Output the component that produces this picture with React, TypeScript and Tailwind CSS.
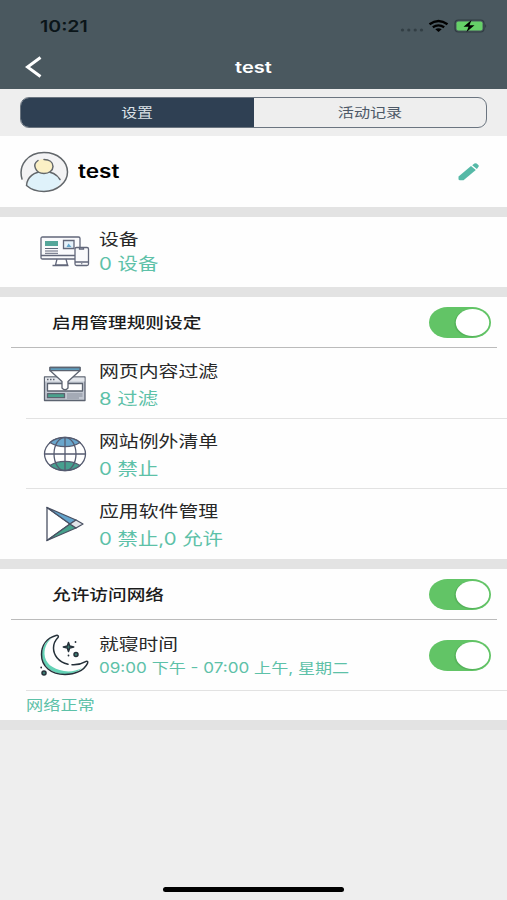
import type { ReactNode } from 'react';

interface RowProps {
  icon: ReactNode;
  title: string;
  detail: string;
}

// Wide lettering: glyphs are stretched horizontally from their left edge
function WideText({ children, className = '' }: { children: ReactNode; className?: string }) {
  return (
    <span className={`block w-max origin-left scale-x-[1.22] whitespace-pre ${className}`}>
      {children}
    </span>
  );
}

function Toggle() {
  return (
    <button type="button" role="switch" aria-checked="true" className="block h-[31px] w-[62px] shrink-0">
      <svg viewBox="0 0 62 31" className="h-full w-full">
        <rect width="62" height="31" rx="18.5" ry="15.5" fill="#62c466" />
        <ellipse cx="42.5" cy="16.2" rx="17.2" ry="14" fill="#4fa854" opacity="0.6" />
        <ellipse cx="43.5" cy="15.5" rx="16.7" ry="13.5" fill="#fff" />
      </svg>
    </button>
  );
}

function AvatarIcon() {
  return (
    <svg width="50" height="42" viewBox="0 0 50 42" fill="none" stroke="#62676b" strokeWidth="1.5" strokeLinecap="round">
      <ellipse cx="25" cy="21" rx="23.5" ry="19" fill="#f3f3f4" stroke="none" />
      <path d="M8 35c1-8 7-14 17-14 8 0 14 4 17 9l-2 4c-4 4-9 6-16 6-7 0-12-2-16-5z" fill="#dff2fa" stroke="none" />
      <path d="M3 28C-1 14 9 1.500 25 1.500c14 0 23.500 9 23.500 19.500S38 40.500 25 40.500c-7 0-13-2-17.500-6C8 26 15 20.500 25 20.500c7 0 13 3 16 8" />
      <ellipse cx="25" cy="15.500" rx="9" ry="7.500" fill="#fbf0c5" stroke="none" />
      <path d="M19 9.500c-3 2-4 5-2.500 8 1.500 3.500 4.500 5 8.500 5 5 0 9-3 9-7 0-4.500-4-7-9-7" />
    </svg>
  );
}

function DevicesIcon() {
  return (
    <svg width="50" height="32" viewBox="0 0 50 32" fill="none" stroke="#62677a" strokeWidth="1.300">
      <path d="M2.500 1h36q1.500 0 1.500 1.500v19q0 1.500-1.500 1.500h-36Q1 23 1 21.500v-19Q1 1 2.500 1z" fill="#fafafc" />
      <path d="M1 19.500h34M17 23l-1.500 6h12L26 23M12.500 29.500h16" />
      <path d="M5 5h13v5H5z" fill="#55a69a" stroke="none" />
      <path d="M5 12.500h13M5 15h13M5 17.300h13" strokeWidth="1" />
      <path d="M23.500 4.500h10.500v8H23.500z" fill="#e5f1fa" />
      <path d="M26.500 11l2-3.500 3 3.500z" fill="#63a7ce" stroke="none" />
      <rect x="35" y="11.500" width="13.500" height="18" rx="1.500" fill="#fafafc" />
      <path d="M35 26h13.500M39.500 12v1h4v-1M41.700 27.200v1" />
    </svg>
  );
}

function FilterIcon() {
  return (
    <svg width="44" height="36" viewBox="0 0 44 36" fill="none" stroke="#5c6370" strokeWidth="1.300" strokeLinejoin="round">
      <rect x="1.500" y="11" width="40.500" height="23.500" fill="#c3c8d2" />
      <path d="M2 11.500h39.500v4H2z" fill="#e4e7ec" stroke="none" />
      <path d="M4 13.500h8" strokeDasharray="1.500 1.500" />
      <path d="M4.500 17.500h35v7.500h-35z" fill="#fff" />
      <path d="M4.500 27.700h17v4h-17z" fill="#49a28d" />
      <path d="M24 28h15.500M24 30h15.500M24 32h12" strokeWidth="1" stroke="#858c99" />
      <path d="M7 1.500h30V4.500L25 15.500v6.500q-3 3.500-6 0v-6.500L7 4.500z" fill="#fff" />
      <path d="M7 1.500h30V4.700H7z" fill="#5f9dbd" />
    </svg>
  );
}

function GlobeIcon() {
  return (
    <svg width="44" height="36" viewBox="0 0 44 36" fill="none" stroke="#555b70" strokeWidth="1.300">
      <ellipse cx="22" cy="18" rx="20.500" ry="16.700" fill="#fff" />
      <path d="M7 6.500C14 0 30 0 37 6.500 29 12 15 12 7 6.500z" fill="#6aa6cc" />
      <path d="M7 29.500C15 24 29 24 37 29.500 30 36 14 36 7 29.500z" fill="#46a08f" />
      <ellipse cx="22" cy="18" rx="11" ry="16.700" />
      <path d="M1.500 18h41M22 1.500v33" />
    </svg>
  );
}

function AppsIcon() {
  return (
    <svg width="40" height="36" viewBox="0 0 40 36" fill="none" stroke="#4a5163" strokeWidth="1.300" strokeLinejoin="round" className="ml-[2px]">
      <path d="M2 1.500l23 16.500L2 34.500z" fill="#fff" />
      <path d="M2 1.500l29 12.500-6 4z" fill="#63a4cc" />
      <path d="M2 34.500L25 18l6 4z" fill="#46a28c" />
      <path d="M31 14l7 4-7 4-6-4z" fill="#e2e5e9" />
    </svg>
  );
}

function MoonIcon() {
  return (
    <svg width="50" height="44" viewBox="0 0 50 44" fill="none" stroke="#26313a" strokeWidth="1.500" strokeLinecap="round" strokeLinejoin="round">
      <path d="M12 4C6 7 2 13 2 20.500 2 32 12 40 25 40c7 0 13-2.500 17-6-6 3-12 4-18 3C12 35 5 29 4.500 20 4.500 13 7 8 12 4z" fill="#63d2b5" stroke="none" />
      <path d="M32 30.800q7 .5 13-3c2-1 3.500-.5 2.500 1.500C44 36.500 35 40.500 25 40.500 11 40.500 1.500 32.500 1.500 20.500 1.500 11 7 4 16 1.500c2-.5 3 .5 2 2-2.500 2.500-4.500 5.500-4.500 10.500 0 6.500 4.500 14 14.500 16.300" />
      <path d="M28.500 8.500l1.200 3.500 4 1-4 1-1.200 3.500-1.200-3.500-4-1 4-1z" fill="#3c7d72" />
      <circle cx="36" cy="20.500" r="2" fill="#3c7d72" />
      <circle cx="4" cy="39" r="2" fill="#3c7d72" />
      <path d="M35.500 8h.01M28.500 21.500h.01M1.200 33.500h.01" strokeWidth="1.800" />
    </svg>
  );
}

function RuleRow({ icon, title, detail }: RowProps) {
  return (
    <div className="ml-[26px] flex h-[70px]">
      <div className="flex w-[73px] shrink-0 items-center pl-[17px] pt-[2px]">{icon}</div>
      <div className="pt-[10px]">
        <WideText className="text-[16.3px] leading-[27px] text-[#282828]">{title}</WideText>
        <WideText className="pt-px text-[16.7px] leading-[27px] text-[#5dc1a8]">{detail}</WideText>
      </div>
    </div>
  );
}

function SectionHead({ title }: { title: string }) {
  return (
    <div className="ml-[11px] mr-[10px] flex h-[51px] items-center justify-between border-b border-[#bbb] pl-[41px] pr-[6px]">
      <WideText className="pt-[3px] text-[15.3px] font-medium text-[#1c1c1c]">{title}</WideText>
      <Toggle />
    </div>
  );
}

const rules: RowProps[] = [
  { icon: <FilterIcon />, title: '网页内容过滤', detail: '8 过滤' },
  { icon: <GlobeIcon />, title: '网站例外清单', detail: '0 禁止' },
  { icon: <AppsIcon />, title: '应用软件管理', detail: '0 禁止,0 允许' },
];

export default function App() {
  return (
    <div className="flex h-[900px] w-[507px] flex-col overflow-hidden bg-[#eee] font-[Inter,'Noto_Sans_CJK_SC',sans-serif]">
      <header className="h-[89px] shrink-0 bg-[#4a585f]">
        <div className="flex h-[50px] items-center justify-between pl-[40px] pr-[20px] pt-[2px]">
          <WideText className="text-[16px] font-semibold text-[#0b1519]">10:21</WideText>
          <svg width="88" height="18" viewBox="0 0 88 18">
            <g fill="#323e44">
              <circle cx="3.500" cy="13" r="1.600" />
              <circle cx="9.800" cy="13" r="1.600" />
              <circle cx="16.200" cy="13" r="1.600" />
              <circle cx="22.500" cy="13" r="1.600" />
            </g>
            <g fill="none" stroke="#000" strokeWidth="2.300">
              <path d="M30.500 7.300q9-6.600 18 0" />
              <path d="M33.800 10.300q5.700-4 11.400 0" />
            </g>
            <path d="M36.300 12.300q3.200-2 6.400 0L39.500 15z" fill="#000" />
            <rect x="56" y="3" width="29" height="12" rx="3.500" fill="none" stroke="#303c42" strokeWidth="1.200" />
            <rect x="57.500" y="4.500" width="26" height="9" rx="1.800" fill="#66d168" />
            <path d="M86.200 7q2 2 0 4z" fill="#303c42" />
            <path d="M72.500 3l-8 6.700h5l-2 5.300 8-6.700h-5z" fill="#000" />
          </svg>
        </div>
        <div className="grid h-[34px] grid-cols-3 items-center">
          <svg width="18" height="22" viewBox="0 0 18 22" className="ml-[25px]" fill="none" stroke="#fff" strokeWidth="3">
            <path d="M15.500 1.500L2.500 11l13 9.500" />
          </svg>
          <h1 className="scale-x-[1.250] text-center text-[16px] font-semibold text-white">test</h1>
        </div>
      </header>

      <div className="h-[47px] shrink-0 px-[20px] pt-[8px]">
        <div className="flex h-[31px] overflow-hidden rounded-[9px] border border-[#6b7580] text-[13px]">
          <button type="button" className="flex w-[233px] items-center justify-center bg-[#2f4053] text-[#dde3e8]">
            <span className="scale-x-[1.22]">设置</span>
          </button>
          <button type="button" className="flex flex-1 items-center justify-center text-[#4d5967]">
            <span className="scale-x-[1.24]">活动记录</span>
          </button>
        </div>
      </div>

      <section className="flex h-[71px] shrink-0 items-center bg-[#fefefe] pl-[19px] pr-[28px]">
        <AvatarIcon />
        <WideText className="ml-[9px] text-[18.500px] font-semibold text-black">test</WideText>
        <svg width="21" height="18" viewBox="0 0 21 18" className="ml-auto" fill="#55b9a7">
          <path d="M.500 13.500L13 3l4.800 4L5.500 17.300H2q-1.500 0-1.500-1.300z" />
          <path d="M14.200 2.200L16.400.600q1.100-.8 2.200 0l1.700 1.500q1 .9 0 1.800L18.900 5.900z" />
        </svg>
      </section>

      <section className="h-[80px] shrink-0 border-t-10 border-[#e3e3e3] bg-[#fefefe]">
        <div className="flex pl-[40px]">
          <div className="w-[59px] pt-[19px]">
            <DevicesIcon />
          </div>
          <div className="pt-[10px]">
            <WideText className="text-[16.3px] leading-[25px] text-[#282828]">设备</WideText>
            <WideText className="text-[16.7px] leading-[25px] text-[#5dc1a8]">0 设备</WideText>
          </div>
        </div>
      </section>

      <section className="h-[272px] shrink-0 border-t-10 border-[#e3e3e3] bg-[#fefefe]">
        <SectionHead title="启用管理规则设定" />
        {rules.map((rule, i) => (
          <div key={rule.title} className="relative h-[70px]">
            {i > 0 && <div className="absolute left-[26px] right-0 top-0 h-px bg-[#e2e2e2]" />}
            <RuleRow {...rule} />
          </div>
        ))}
      </section>

      <section className="h-[171px] shrink-0 border-y-10 border-[#e3e3e3] bg-[#fefefe]">
        <SectionHead title="允许访问网络" />
        <div className="flex h-[70px] pl-[40px] pr-[16px]">
          <div className="w-[59px] shrink-0 pt-[14px]">
            <MoonIcon />
          </div>
          <div className="pt-[12px]">
            <WideText className="text-[16.2px] leading-[25px] text-[#282828]">就寝时间</WideText>
            <WideText className="text-[14px] leading-[22px] text-[#5dc1a8]">
              09:00 下午 - 07:00 上午, 星期二
            </WideText>
          </div>
          <div className="ml-auto pt-[20px]">
            <Toggle />
          </div>
        </div>
        <div className="ml-[26px] flex h-[30px] items-center border-t border-[#e2e2e2]">
          <WideText className="pb-px text-[14.1px] text-[#5dc1a8]">网络正常</WideText>
        </div>
      </section>

      <div className="mx-auto mb-[8px] mt-auto h-[5px] w-[181px] rounded-full bg-black" />
    </div>
  );
}
